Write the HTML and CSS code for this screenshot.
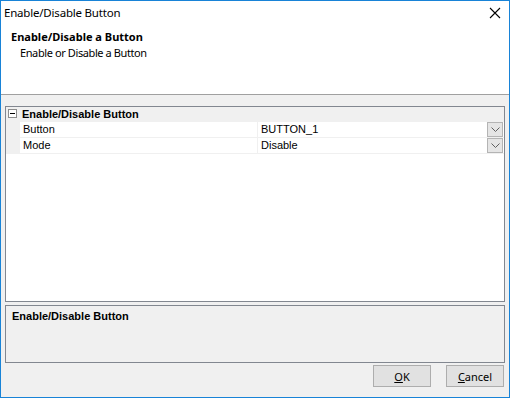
FILE: index.html
```html
<!DOCTYPE html>
<html lang="en">
<head>
  <meta charset="UTF-8">
  <title>Enable/Disable Button</title>
  <link rel="stylesheet" href="styles.css">
</head>
<body>
<div class="window">
  <!-- title bar -->
  <div class="titlebar">
    <span class="title">Enable/Disable Button</span>
    <svg class="close" width="12" height="12" viewBox="0 0 12 12">
      <path d="M1 1 L11 11 M11 1 L1 11" stroke="#000" stroke-width="1.1" fill="none"/>
    </svg>
  </div>

  <!-- header -->
  <div class="header">
    <div class="header-title">Enable/Disable a Button</div>
    <div class="header-sub">Enable or Disable a Button</div>
  </div>

  <div class="content">
    <!-- property grid -->
    <div class="grid">
      <div class="cat-row">
        <span class="toggle"></span>
        <span class="cat-name">Enable/Disable Button</span>
      </div>
      <div class="prop-row">
        <span class="gutter"></span>
        <span class="prop-name">Button</span>
        <span class="prop-value">BUTTON_1</span>
        <span class="drop">
          <svg width="9" height="5" viewBox="0 0 9 5"><path d="M0.5 0.5 L4.5 4.5 L8.5 0.5" stroke="#606060" fill="none"/></svg>
        </span>
      </div>
      <div class="prop-row">
        <span class="gutter"></span>
        <span class="prop-name">Mode</span>
        <span class="prop-value">Disable</span>
        <span class="drop">
          <svg width="9" height="5" viewBox="0 0 9 5"><path d="M0.5 0.5 L4.5 4.5 L8.5 0.5" stroke="#606060" fill="none"/></svg>
        </span>
      </div>
    </div>

    <!-- help pane -->
    <div class="help">
      <div class="help-title">Enable/Disable Button</div>
    </div>

    <div class="buttons">
      <button class="btn"><u>O</u>K</button>
      <button class="btn"><u>C</u>ancel</button>
    </div>
  </div>
</div>
</body>
</html>
```

FILE: styles.css
```css
* {
  margin: 0;
  padding: 0;
  box-sizing: border-box;
}

body {
  width: 510px;
  height: 398px;
  overflow: hidden;
  font-family: "Liberation Sans", Arial, sans-serif;
  font-size: 11px;
  color: #000;
}

.window {
  width: 510px;
  height: 398px;
  border: 1px solid #1883d7;
  display: flex;
  flex-direction: column;
  background-color: #f0f0f0;
}

.titlebar {
  height: 30px;
  background-color: #fff;
  display: flex;
  align-items: flex-start;
  justify-content: space-between;
  padding: 4px 8px 0 3px;
}

.title {
  font-family: "Noto Sans", sans-serif;
  font-size: 11.5px;
  line-height: 16px;
  letter-spacing: -0.2px;
}

.close {
  display: block;
  margin-top: 2px;
}

.header {
  height: 64px;
  background-color: #fff;
  border-bottom: 1px solid #a0a0a0;
  padding: 0 0 0 10px;
  font-family: "Noto Sans", sans-serif;
  font-size: 11px;
}

.header-title {
  font-weight: bold;
  line-height: 15px;
  margin-top: -2px;
}

.header-sub {
  line-height: 16px;
  padding-left: 9px;
  margin-top: 1px;
  letter-spacing: -0.4px;
}

.content {
  flex: 1;
  padding: 11px 4px 0 4px;
  display: flex;
  flex-direction: column;
}

.grid {
  height: 196px;
  background-color: #fff;
  border: 1px solid #828790;
}

.cat-row {
  height: 15px;
  background-color: #f0f0f0;
  display: flex;
  align-items: center;
  border-bottom: 1px solid #f0f0f0;
}

.toggle {
  width: 9px;
  height: 9px;
  margin: 0 5px 1px 2px;
  border: 1px solid #8d8d8d;
  background-color: #fff;
  position: relative;
}

.toggle::after {
  content: "";
  position: absolute;
  left: 1px;
  top: 3px;
  width: 5px;
  height: 1px;
  background-color: #000;
}

.cat-name {
  font-weight: bold;
}

.prop-row {
  height: 16px;
  display: flex;
  border-bottom: 1px solid #f0f0f0;
}

.gutter {
  width: 14px;
  background-color: #f0f0f0;
}

.prop-name {
  width: 237px;
  padding-left: 3px;
  line-height: 15px;
}

.prop-value {
  flex: 1;
  border-left: 1px solid #f0f0f0;
  padding-left: 3px;
  line-height: 15px;
}

.drop {
  width: 16px;
  height: 15px;
  margin-right: 1px;
  background-color: #e5e5e5;
  border: 1px solid #b4b4b4;
  display: flex;
  align-items: center;
  justify-content: center;
}

.help {
  height: 58px;
  margin-top: 3px;
  border: 1px solid #828790;
  padding: 4px 6px;
}

.help-title {
  font-weight: bold;
}

.buttons {
  display: flex;
  justify-content: flex-end;
  gap: 15px;
  margin-top: 2px;
  padding-right: 1px;
}

.btn {
  width: 58px;
  height: 22px;
  background-color: #e1e1e1;
  border: 1px solid #adadad;
  font-family: "Noto Sans", sans-serif;
  font-size: 11px;
  color: #000;
}

.btn u {
  text-decoration: underline;
}
```
